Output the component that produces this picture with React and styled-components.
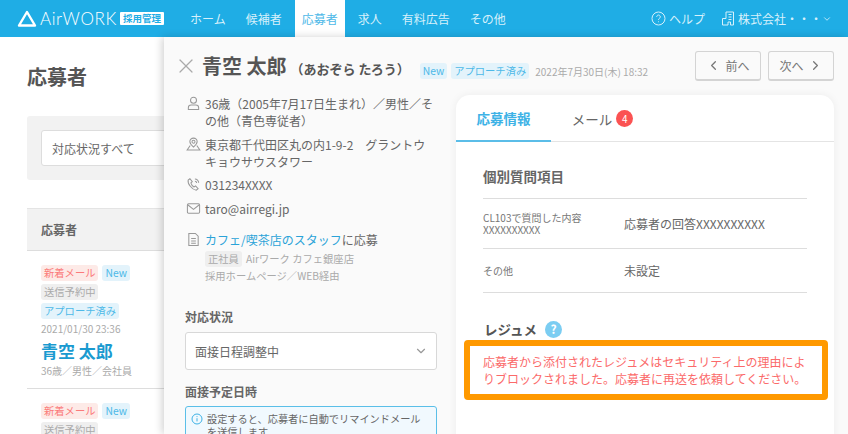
import React from 'react';
import styled, { createGlobalStyle } from 'styled-components';
import { X, ChevronDown, ChevronLeft, ChevronRight } from 'lucide-react';

const GlobalStyle = createGlobalStyle`
  html, body {
    margin: 0;
    padding: 0;
    height: 434px;
    overflow: hidden;
    background: #fff;
  }
  * { box-sizing: border-box; }
  body {
    font-family: "Noto Sans CJK JP", "Noto Sans", sans-serif;
    color: #666;
  }
`;

const Shell = styled.div`
  position: relative;
  width: 848px;
  height: 434px;
  overflow: hidden;
`;

const TopBar = styled.header`
  height: 37px;
  background: #1fade5;
  display: flex;
  align-items: center;
  padding-left: 17px;
  color: #fff;
`;

const LogoWrap = styled.div`
  display: flex;
  align-items: center;
  width: 166px;
  flex: none;
`;

const LogoWord = styled.span`
  font-family: "Lato", sans-serif;
  font-size: 17px;
  font-weight: 300;
  letter-spacing: 0.6px;
  width: 74px;
  margin: 0 6px 0 3px;
  line-height: 1;
`;

const LogoBadge = styled.span`
  background: #fff;
  color: #1fade5;
  font-size: 9.5px;
  font-weight: 700;
  line-height: 13px;
  width: 44px;
  text-align: center;
  border-radius: 1px;
  white-space: nowrap;
`;

const Nav = styled.nav`
  display: flex;
  gap: 6px;
  height: 37px;
`;

const NavItem = styled.a`
  display: flex;
  align-items: center;
  padding: 0 7px;
  font-size: 12px;
  white-space: nowrap;
  color: ${p => (p.$active ? '#4db9e8' : '#d6f0fb')};
  background: ${p => (p.$active ? '#fff' : 'transparent')};
`;

const TopRight = styled.div`
  margin-left: auto;
  padding-right: 16px;
  display: flex;
  align-items: center;
  color: #d6f0fb;
  font-size: 12px;
`;

const TopLink = styled.span`
  display: flex;
  align-items: center;
  gap: 3px;
  margin-right: ${p => p.$gap || 0}px;
  white-space: nowrap;
`;

const Page = styled.main`
  padding: 25px 0 0 27px;
`;

const PageTitle = styled.h1`
  margin: 0 0 24px;
  font-size: 20px;
  line-height: 30px;
  font-weight: 700;
  color: #555;
`;

const FilterPanel = styled.div`
  height: 64px;
  background: #f2f2f2;
  border-radius: 3px;
  padding: 14px;
  margin-bottom: 28px;
`;

const FilterSelect = styled.div`
  width: 200px;
  height: 36px;
  background: #fff;
  border: 1px solid #ddd;
  border-radius: 3px;
  display: flex;
  align-items: center;
  padding-left: 10px;
  font-size: 12px;
  color: #666;
`;

const TableHead = styled.div`
  height: 43px;
  background: #f2f2f2;
  border-top: 1px solid #e4e4e4;
  border-bottom: 1px solid #ddd;
  padding-left: 14px;
  display: flex;
  align-items: center;
  font-size: 12px;
  font-weight: 700;
  color: #666;
`;

const ApplicantRow = styled.div`
  padding: 14px 14px 9px;
  border-bottom: 1px solid #ddd;
`;

const TagLine = styled.div`
  display: flex;
  gap: 4px;
  margin-bottom: 3px;
`;

const Tag = styled.span`
  display: inline-block;
  font-size: 10.3px;
  line-height: 16px;
  padding: 0 3px;
  border-radius: 3px;
  white-space: nowrap;
  color: ${p => ({ red: '#fb7a7a', blue: '#4db9e8', gray: '#aaa' }[p.$tone])};
  background: ${p => ({ red: '#fdeae7', blue: '#e3f3fb', gray: '#efefef' }[p.$tone])};
`;

const RowDate = styled.div`
  font-size: 10px;
  line-height: 13px;
  color: #aaa;
`;

const RowName = styled.div`
  font-size: 17px;
  line-height: 22px;
  margin-top: 5px;
  font-weight: 700;
  color: #1a9ad0;
  white-space: nowrap;
`;

const RowMeta = styled.div`
  font-size: 10px;
  line-height: 16px;
  margin-top: 1px;
  color: #aaa;
`;

const Drawer = styled.section`
  position: absolute;
  left: 164px;
  top: 37px;
  right: 0;
  bottom: 0;
  background: #fafafa;
  box-shadow: -2px 0 8px rgba(0, 0, 0, 0.18);
  padding: 14px 14px 0 16px;
`;

const DrawerHead = styled.div`
  display: flex;
  align-items: flex-start;
  height: 44px;
`;

const CloseBtn = styled.span`
  display: flex;
  color: #aaa;
  margin: 3px 4px 0 -6px;
`;

const FullName = styled.h2`
  margin: 0;
  font-size: 20px;
  line-height: 30px;
  font-weight: 700;
  color: #555;
  white-space: nowrap;
`;

const Kana = styled.span`
  font-size: 13px;
  margin-left: 4px;
`;

const HeadTags = styled.div`
  display: flex;
  gap: 4px;
  margin: 12px 0 0 10px;
`;

const HeadDate = styled.span`
  font-size: 10px;
  line-height: 16px;
  margin: 13px 0 0 6px;
  color: #aaa;
  white-space: nowrap;
`;

const Pager = styled.div`
  margin-left: auto;
  display: flex;
  gap: 7px;
`;

const PagerBtn = styled.button`
  width: 66px;
  height: 30px;
  background: #fafafa;
  border: 1px solid #d4d4d4;
  border-bottom-width: 2px;
  border-radius: 3px;
  display: flex;
  align-items: center;
  justify-content: center;
  gap: 4px;
  font-family: inherit;
  font-size: 12px;
  color: #777;
  padding: 0;
`;

const Columns = styled.div`
  display: grid;
  grid-template-columns: 252px 378px;
  gap: 19px;
  margin-left: 5px;
`;

const InfoColumn = styled.div`
  min-width: 0;
`;

const InfoRow = styled.div`
  display: grid;
  grid-template-columns: 19px 1fr;
  font-size: 12px;
  line-height: 17px;
  color: #666;
  margin-bottom: ${p => p.$after ?? 6}px;
  padding-left: 1px;

  svg { margin-top: 1px; }
`;

const JobLink = styled.a`
  color: #2ba3d8;
`;

const JobMeta = styled.div`
  font-size: 10.3px;
  line-height: 17px;
  color: #aaa;
`;

const GrayTag = styled(Tag)`
  margin-right: 4px;
`;

const FieldLabel = styled.h3`
  margin: ${p => p.$top}px 0 ${p => p.$bottom}px;
  font-size: 12px;
  line-height: 18px;
  font-weight: 700;
  color: #666;
`;

const StatusSelect = styled.div`
  height: 38px;
  background: #fff;
  border: 1px solid #d8d8d8;
  border-radius: 3px;
  display: flex;
  align-items: center;
  justify-content: space-between;
  padding: 0 8px 0 9px;
  font-size: 12px;
  color: #666;
`;

const Notice = styled.div`
  display: flex;
  gap: 4px;
  background: #f1f9fe;
  border: 1px solid #5bbfe8;
  border-radius: 3px;
  padding: 5px 10px 6px 5px;
  font-size: 10.2px;
  line-height: 13px;
  color: #666;

  svg { flex: none; margin-top: 1px; }
`;

const Card = styled.div`
  height: 420px;
  background: #fff;
  border-radius: 14px 14px 0 0;
  box-shadow: 0 0 8px rgba(0, 0, 0, 0.06);
`;

const Tabs = styled.div`
  display: flex;
  height: 47px;
  border-bottom: 1px solid #e4e4e4;
`;

const Tab = styled.div`
  width: ${p => p.$w}px;
  height: 47px;
  display: flex;
  align-items: center;
  justify-content: center;
  gap: 4px;
  font-size: 13.5px;
  font-weight: ${p => (p.$active ? 700 : 400)};
  color: ${p => (p.$active ? '#3db2e6' : '#666')};
  border-bottom: ${p => (p.$active ? '2px solid #5bbde8' : 'none')};
`;

const CountBadge = styled.span`
  width: 17px;
  height: 17px;
  border-radius: 50%;
  background: #fb5252;
  color: #fff;
  font-size: 10px;
  display: flex;
  align-items: center;
  justify-content: center;
`;

const CardBody = styled.div`
  padding: 24px 27px 0;
`;

const SectionTitle = styled.h3`
  margin: 0;
  font-size: 13.5px;
  line-height: 20px;
  font-weight: 700;
  color: #666;
  padding-bottom: 12px;
  border-bottom: 1px solid #ddd;
`;

const QaRow = styled.div`
  display: grid;
  grid-template-columns: 141px 1fr;
  align-items: center;
  height: ${p => p.$h}px;
  border-bottom: 1px solid #ddd;
`;

const QaLabel = styled.div`
  font-size: 10px;
  line-height: 12px;
  color: #777;
`;

const QaValue = styled.div`
  font-size: 12px;
  color: #666;
`;

const ResumeTitle = styled.h3`
  margin: 26px 0 0;
  display: flex;
  align-items: center;
  gap: 8px;
  font-size: 13.5px;
  line-height: 20px;
  font-weight: 700;
  color: #555;
  padding-left: 1px;
`;

const HelpDot = styled.span`
  width: 17px;
  height: 17px;
  border-radius: 50%;
  background: #7bcdf2;
  color: #fff;
  font-size: 12px;
  font-weight: 700;
  display: flex;
  align-items: center;
  justify-content: center;
`;

const Blocked = styled.div`
  margin: 1px -21px 0 -19px;
  height: 60px;
  border: 6px solid #ff9900;
  border-radius: 4px;
  padding: 7px 13px 0;
  font-size: 12px;
  line-height: 17px;
  color: #fb6a6a;
`;

const LogoMark = () => (
  <svg width="20" height="18" viewBox="0 0 20 18" fill="none" stroke="#fff" strokeWidth="2.4" strokeLinejoin="round">
    <path d="M10 2 L18 15.5 H2 Z" />
  </svg>
);

const iconProps = { width: 15, height: 15, viewBox: '0 0 16 16', fill: 'none', stroke: '#999', strokeWidth: 1.1 };

const PersonIcon = () => (
  <svg {...iconProps}>
    <circle cx="8" cy="4.500" r="3.200" />
    <path d="M2.500 14.500v-2c0-1.600 1.400-2.800 3-2.800h5c1.600 0 3 1.200 3 2.800v2z" />
  </svg>
);

const PinIcon = () => (
  <svg {...iconProps}>
    <circle cx="8" cy="5" r="1.600" />
    <path d="M8 1.200c2.300 0 3.900 1.600 3.900 3.700 0 2-2.400 4.600-3.900 5.800-1.500-1.200-3.900-3.800-3.900-5.800 0-2.100 1.600-3.700 3.900-3.700z" />
    <path d="M4.500 9 1.200 13.800h13.600L11.500 9" />
  </svg>
);

const PhoneIcon = () => (
  <svg {...iconProps}>
    <path d="M4.200 1.800 2.300 3.200c-.8 3.800 4 10.400 8.600 10.900l2-1.700-2.700-2.800-1.600 1C7 9.800 5.700 8 5.200 6.200l1.500-1.300z" />
    <path d="M9.500 2.200a4 4 0 0 1 4 4M9.500 4.500a1.800 1.800 0 0 1 1.800 1.800" />
  </svg>
);

const MailIcon = () => (
  <svg {...iconProps}>
    <rect x="1.500" y="3" width="13" height="10" rx="1.200" />
    <path d="M1.800 4 8 9l6.200-5" />
  </svg>
);

const DocIcon = () => (
  <svg {...iconProps}>
    <path d="M3 1.500h7l3 3v10H3z" />
    <path d="M5.500 7h5M5.500 9.500h5M5.500 12h5" />
  </svg>
);

const HelpCircle = () => (
  <svg width="15" height="15" viewBox="0 0 15 15" fill="none" stroke="#d6f0fb" strokeWidth="1">
    <circle cx="7.500" cy="7.500" r="6.500" />
    <path d="M5.700 5.800a1.800 1.800 0 1 1 2.700 1.600c-.6.400-.9.700-.9 1.400M7.500 10.400v.8" />
  </svg>
);

const BuildingIcon = () => (
  <svg width="14" height="15" viewBox="0 0 14 15" fill="none" stroke="#d6f0fb" strokeWidth="1">
    <path d="M5 1h7.500v13H9.500v-3H7v3H1.500V7.500H5z" />
    <path d="M7.500 3.500h3M7.500 6h3M7.500 8.500h3" />
  </svg>
);

const InfoIcon = () => (
  <svg width="12" height="12" viewBox="0 0 12 12" fill="none" stroke="#3db2e6" strokeWidth="1">
    <circle cx="6" cy="6" r="5" />
    <path d="M6 5.200v3.200M6 3.200v.9" />
  </svg>
);

const navItems = ['ホーム', '候補者', '応募者', '求人', '有料広告', 'その他'];

function ApplicantCard({ full }) {
  return (
    <ApplicantRow>
      <TagLine>
        <Tag $tone="red">新着メール</Tag>
        <Tag $tone="blue">New</Tag>
      </TagLine>
      <TagLine>
        <Tag $tone="gray">送信予約中</Tag>
      </TagLine>
      {full && (
        <>
          <TagLine>
            <Tag $tone="blue">アプローチ済み</Tag>
          </TagLine>
          <RowDate>2021/01/30 23:36</RowDate>
          <RowName>青空 太郎</RowName>
          <RowMeta>36歳／男性／会社員</RowMeta>
        </>
      )}
    </ApplicantRow>
  );
}

export default function App() {
  return (
    <Shell>
      <GlobalStyle />
      <TopBar>
        <LogoWrap>
          <LogoMark />
          <LogoWord>AirWORK</LogoWord>
          <LogoBadge>採用管理</LogoBadge>
        </LogoWrap>
        <Nav>
          {navItems.map(item => (
            <NavItem key={item} $active={item === '応募者'}>{item}</NavItem>
          ))}
        </Nav>
        <TopRight>
          <TopLink $gap={16}><HelpCircle />ヘルプ</TopLink>
          <TopLink $gap={0}><BuildingIcon />株式会社・・・</TopLink>
          <ChevronDown size={10} color="#d6f0fb" />
        </TopRight>
      </TopBar>

      <Page>
        <PageTitle>応募者</PageTitle>
        <FilterPanel>
          <FilterSelect>対応状況すべて</FilterSelect>
        </FilterPanel>
        <TableHead>応募者</TableHead>
        <ApplicantCard full />
        <ApplicantCard />
      </Page>

      <Drawer>
        <DrawerHead>
          <CloseBtn><X size={24} strokeWidth={1.2} /></CloseBtn>
          <FullName>青空 太郎<Kana>（あおぞら たろう）</Kana></FullName>
          <HeadTags>
            <Tag $tone="blue">New</Tag>
            <Tag $tone="blue">アプローチ済み</Tag>
          </HeadTags>
          <HeadDate>2022年7月30日(木) 18:32</HeadDate>
          <Pager>
            <PagerBtn><ChevronLeft size={15} />前へ</PagerBtn>
            <PagerBtn>次へ<ChevronRight size={15} /></PagerBtn>
          </Pager>
        </DrawerHead>

        <Columns>
          <InfoColumn>
            <InfoRow $after={7}>
              <PersonIcon />
              <span>36歳（2005年7月17日生まれ）／男性／その他（青色専従者）</span>
            </InfoRow>
            <InfoRow>
              <PinIcon />
              <span>東京都千代田区丸の内1-9-2　グラントウキョウサウスタワー</span>
            </InfoRow>
            <InfoRow $after={7}>
              <PhoneIcon />
              <span>031234XXXX</span>
            </InfoRow>
            <InfoRow $after={14}>
              <MailIcon />
              <span>taro@airregi.jp</span>
            </InfoRow>
            <InfoRow $after={2}>
              <DocIcon />
              <span><JobLink>カフェ/喫茶店のスタッフ</JobLink>に応募</span>
            </InfoRow>
            <InfoRow $after={0}>
              <span />
              <JobMeta>
                <GrayTag $tone="gray">正社員</GrayTag>Airワーク カフェ銀座店
                <br />
                採用ホームページ／WEB経由
              </JobMeta>
            </InfoRow>
            <FieldLabel $top={24} $bottom={6}>対応状況</FieldLabel>
            <StatusSelect>
              面接日程調整中
              <ChevronDown size={14} color="#999" />
            </StatusSelect>
            <FieldLabel $top={13} $bottom={5}>面接予定日時</FieldLabel>
            <Notice>
              <InfoIcon />
              <span>設定すると、応募者に自動でリマインドメールを送信します</span>
            </Notice>
          </InfoColumn>

          <Card>
            <Tabs>
              <Tab $active $w={95}>応募情報</Tab>
              <Tab $w={103}>メール<CountBadge>4</CountBadge></Tab>
            </Tabs>
            <CardBody>
              <SectionTitle>個別質問項目</SectionTitle>
              <QaRow $h={50}>
                <QaLabel>CL103で質問した内容<br />XXXXXXXXXX</QaLabel>
                <QaValue>応募者の回答XXXXXXXXXX</QaValue>
              </QaRow>
              <QaRow $h={44}>
                <QaLabel>その他</QaLabel>
                <QaValue>未設定</QaValue>
              </QaRow>
              <ResumeTitle>レジュメ<HelpDot>?</HelpDot></ResumeTitle>
              <Blocked>応募者から添付されたレジュメはセキュリティ上の理由によりブロックされました。応募者に再送を依頼してください。</Blocked>
            </CardBody>
          </Card>
        </Columns>
      </Drawer>
    </Shell>
  );
}
